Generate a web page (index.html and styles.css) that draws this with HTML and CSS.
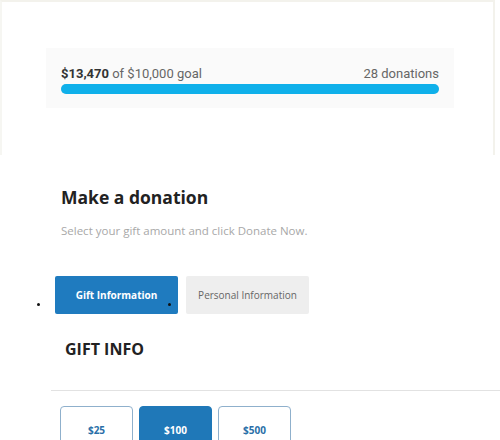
FILE: index.html
```html
<!DOCTYPE html>
<html lang="en-US">

<head>
    <meta charset="UTF-8">
    <title>Make a donation</title>
    <link rel="stylesheet" href="styles.css">
</head>

<body>
    <div class="goal-panel">
        <div class="goal-card">
            <div class="goal-row">
                <span><b>$13,470</b> of $10,000 goal</span>
                <span>28 donations</span>
            </div>
            <div class="goal-bar"><div class="goal-fill" style="width: 100%"></div></div>
        </div>
    </div>

    <div class="donate">
        <h1>Make a donation</h1>
        <p class="lead">Select your gift amount and click Donate Now.</p>

        <div class="tabs">
            <button class="tab active">Gift Information</button>
            <button class="tab">Personal Information</button>
        </div>

        <h2>GIFT INFO</h2>
        <hr class="rule">

        <div class="amounts">
            <button class="amount">$25</button>
            <button class="amount selected">$100</button>
            <button class="amount">$500</button>
        </div>
    </div>
</body>

</html>
```

FILE: styles.css
```css
body {
    margin: 0;
    padding: 0;
    background-color: #fff;
    font-family: 'Open Sans', sans-serif;
    color: #222;
    overflow: hidden;
}

.goal-panel {
    height: 155px;
    margin-right: 5px;
    padding: 46px 0 0 44px;
    box-sizing: border-box;
    border: 2px solid #f3f2ec;
    border-bottom: none;
    border-left-color: #f6f6f2;
}

.goal-card {
    width: 408px;
    padding: 18px 15px 14px;
    box-sizing: border-box;
    background-color: #fafafa;
}

.goal-row {
    display: flex;
    justify-content: space-between;
    font-family: Roboto, sans-serif;
    font-size: 13px;
    line-height: 16px;
    color: #666;
}

.goal-row b {
    color: #333;
}

.goal-bar {
    margin-top: 2px;
    height: 10px;
    border-radius: 5px;
    background-color: #e6e6e6;
}

.goal-fill {
    height: 100%;
    border-radius: 5px;
    background-color: #0fb0ea;
}

.donate {
    padding-left: 55px;
}

h1 {
    margin: 30px 0 0 6px;
    font-size: 17.5px;
    line-height: 24px;
    font-weight: 700;
    color: #222;
}

.lead {
    margin: 14px 0 0 6px;
    font-size: 11.5px;
    line-height: 16px;
    color: #a8a8a8;
}

.tabs {
    display: flex;
    gap: 8px;
    margin-top: 37px;
}

.tab {
    position: relative;
    width: 123px;
    height: 38px;
    border: none;
    border-radius: 2px;
    background-color: #eeeeee;
    font-family: 'Open Sans', sans-serif;
    font-size: 10px;
    color: #666;
}

.tab.active {
    background-color: #1f7bbf;
    color: #fff;
    font-weight: 700;
}

.tab.active::before,
.tab.active::after {
    content: "";
    position: absolute;
    top: 27px;
    width: 3px;
    height: 3px;
    border-radius: 50%;
    background-color: #111;
}

.tab.active::before {
    left: -18px;
}

.tab.active::after {
    right: 7px;
}

h2 {
    margin: 24px 0 0 10px;
    font-size: 16px;
    line-height: 22px;
    font-weight: 700;
    color: #222;
}

.rule {
    margin: 30px 0 0 -4px;
    border: none;
    border-top: 1px solid #e2e2e2;
}

.amounts {
    display: flex;
    gap: 6px;
    margin: 15px 0 0 5px;
}

.amount {
    width: 73px;
    height: 48px;
    border: 1px solid #8fb0cc;
    border-radius: 4px;
    background-color: #fff;
    font-family: 'Open Sans', sans-serif;
    font-size: 10px;
    font-weight: 700;
    color: #2a6fa8;
}

.amount.selected {
    background-color: #1f78b8;
    border-color: #1f78b8;
    color: #fff;
}
```
